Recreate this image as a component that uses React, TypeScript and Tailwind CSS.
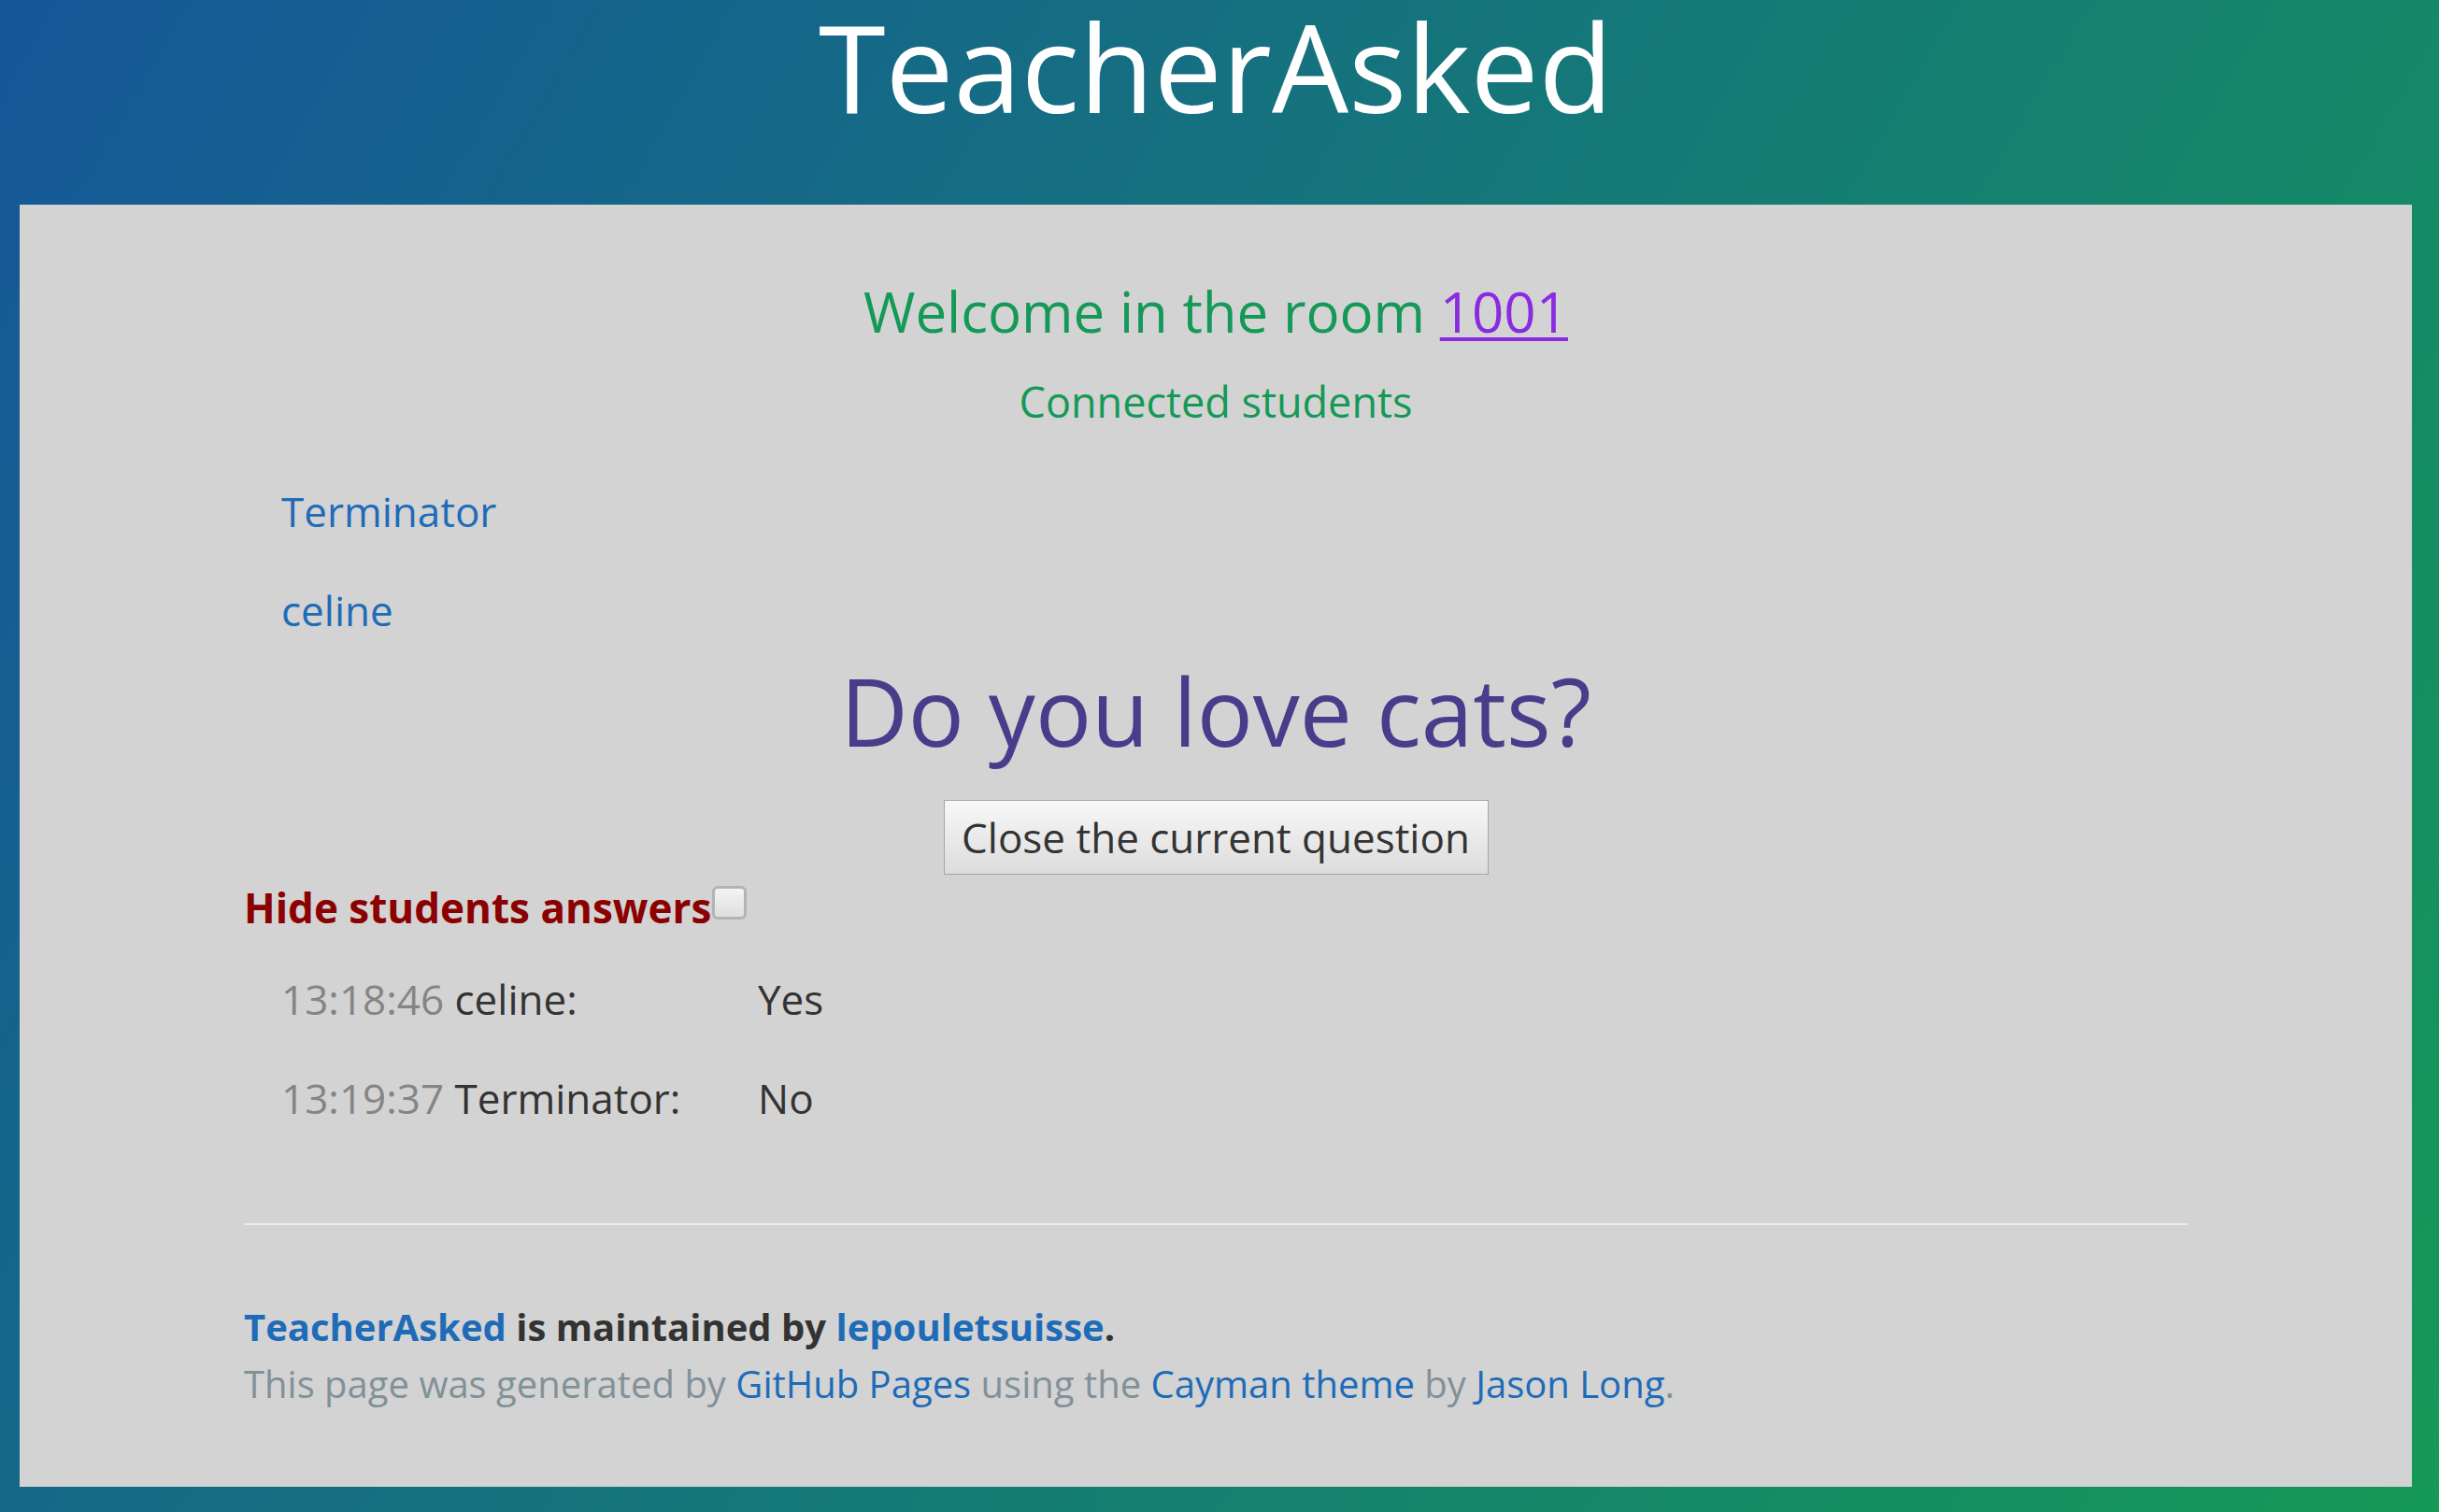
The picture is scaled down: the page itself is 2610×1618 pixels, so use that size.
import React from "react";

export default function App() {
  return (
    <div className="min-h-screen w-full bg-[linear-gradient(120deg,#155799,#159957)] font-['Open_Sans',sans-serif] overflow-hidden">
      <header className="ml-[21px] w-[2560px] h-[219px] pt-[6px] text-center">
        <h1 className="text-[130px] leading-[130px] font-normal text-white">TeacherAsked</h1>
      </header>
      <main className="ml-[21px] w-[2560px] bg-[#d3d3d3] px-[240px] pt-[84px] pb-[90px]">
        <h2 className="text-center text-[60px] leading-[60px] font-normal text-[#159957]">
          Welcome in the room{" "}
          <a href="#" className="text-[#8a2be2] underline decoration-[4px] underline-offset-[5px]">1001</a>
        </h2>
        <h3 className="mt-[45px] text-center text-[45px] leading-[44px] font-normal text-[#159957]">
          Connected students
        </h3>
        <ul className="mt-[73px] pl-[40px] flex flex-col gap-[62px] text-[44px] leading-[44px] text-[#1e6bb8]">
          <li>Terminator</li>
          <li>celine</li>
        </ul>
        <h1 className="mt-[35px] text-center text-[100px] leading-[100px] font-normal text-[#483d8b]">
          Do you love cats?
        </h1>
        <div className="mt-[46px] flex justify-center">
          <button className="w-[583px] h-[80px] border border-[#a6a6a6] bg-[linear-gradient(#f8f8f8,#dcdcdc)] text-[44px] leading-[44px] text-[#333333] font-['Open_Sans',sans-serif]">
            Close the current question
          </button>
        </div>
        <div className="mt-[13px] flex items-start">
          <span className="text-[44px] leading-[44px] font-bold text-[#8b0000]">Hide students answers</span>
          <span className="mt-[-1px] ml-[1px] w-[37px] h-[36px] rounded-[6px] border-[3px] border-[#b4b4b4] bg-[linear-gradient(#f4f4f4,#dedede)]" />
        </div>
        <div className="mt-[54px] pl-[40px] flex flex-col gap-[62px] text-[44px] leading-[44px]">
          <div className="grid grid-cols-[510px_auto]">
            <div>
              <span className="text-[#858585]">13:18:46</span> <span className="text-[#333333]">celine:</span>
            </div>
            <div className="text-[#333333]">Yes</div>
          </div>
          <div className="grid grid-cols-[510px_auto]">
            <div>
              <span className="text-[#858585]">13:19:37</span> <span className="text-[#333333]">Terminator:</span>
            </div>
            <div className="text-[#333333]">No</div>
          </div>
        </div>
        <div className="mt-[112px] h-[2px] bg-[#ececec]" />
        <footer className="mt-[89px] text-[40px] leading-[40px]">
          <div className="font-bold text-[#333333]">
            <a href="#" className="text-[#1e6bb8]">TeacherAsked</a> is maintained by{" "}
            <a href="#" className="text-[#1e6bb8]">lepouletsuisse</a>.
          </div>
          <div className="mt-[21px] text-[#819198]">
            This page was generated by <a href="#" className="text-[#1e6bb8]">GitHub Pages</a> using the{" "}
            <a href="#" className="text-[#1e6bb8]">Cayman theme</a> by <a href="#" className="text-[#1e6bb8]">Jason Long</a>.
          </div>
        </footer>
      </main>
    </div>
  );
}
